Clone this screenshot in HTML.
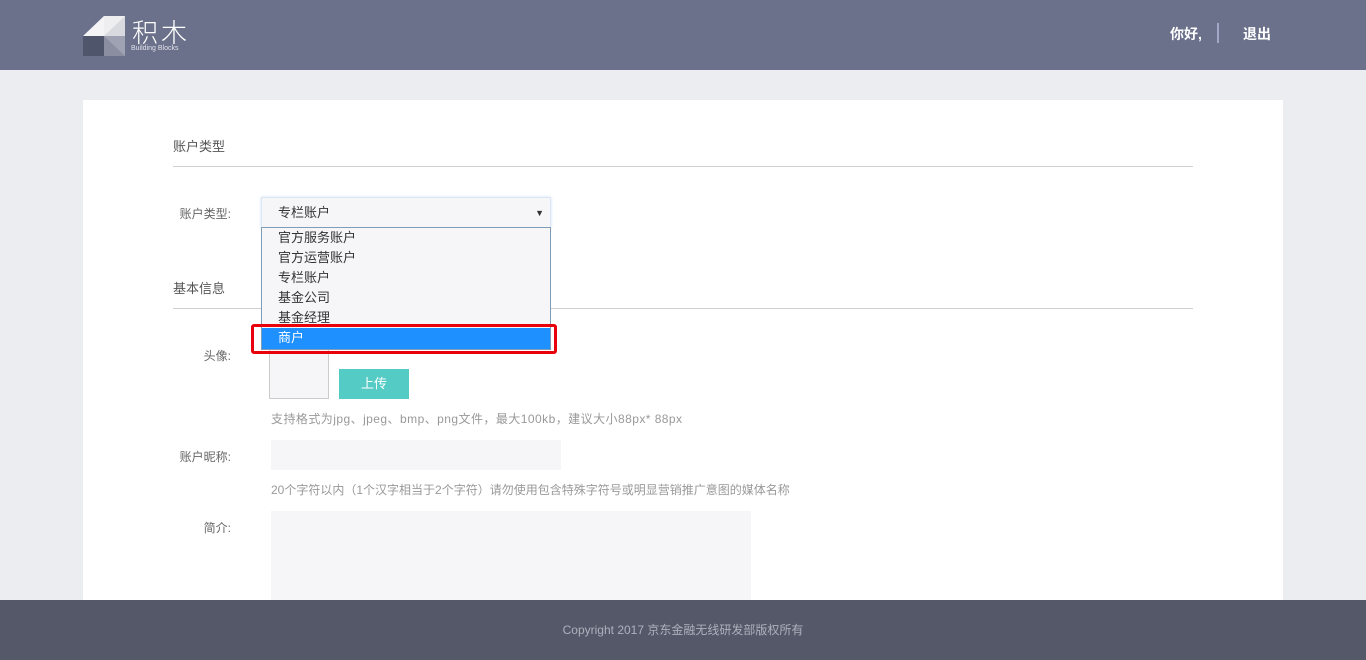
<!DOCTYPE html>
<html><head><meta charset="utf-8"><style>
*{margin:0;padding:0;box-sizing:border-box}
body{width:1366px;height:660px;overflow:hidden;background:#ecedf1;font-family:"Liberation Sans","Noto Sans CJK SC",sans-serif;font-size:13px;color:#555;position:relative}
.hd{position:absolute;left:0;top:0;width:1366px;height:70px;background:#6b718b}
.ab{position:absolute}
.card{position:absolute;left:83px;top:100px;width:1200px;height:520px;background:#fff}
.ft{position:absolute;left:0;top:600px;width:1366px;height:60px;background:#545868;color:#aeb1bd;font-size:12px;text-align:center;line-height:60px}
.line{position:absolute;height:1px;background:#d0d0d0}
.lbl{position:absolute;font-size:12px;color:#666;text-align:right;width:100px}
.tip{position:absolute;font-size:12px;color:#999}
.opt{height:20px;line-height:20px;padding-left:16px;font-size:13px;color:#333}
</style></head><body>
<div class="hd">
<svg class="ab" style="left:83px;top:16px" width="42" height="40" viewBox="0 0 42 40">
<polygon points="0,20 21,0 21,20" fill="#f4f4f6"/>
<polygon points="21,0 42,0 42,20 21,20" fill="#d9dae0"/>
<polygon points="21,0 42,0 21,20" fill="#eeeef1"/>
<polygon points="0,20 21,20 21,40 0,40" fill="#4f556b"/>
<polygon points="21,20 42,20 42,40 21,40" fill="#9ea2b2"/>
<polygon points="21,20 42,40 21,40" fill="#8a8ea0"/>
</svg>
<div class="ab" style="left:132px;top:13px;color:#fff;font-size:26px;font-weight:300;letter-spacing:3px">积木</div>
<div class="ab" style="left:131px;top:45px;color:#e0e2ea;font-size:7px">Building Blocks</div>
<div class="ab" style="left:1170px;top:24px;color:#fff;font-size:14px;font-weight:bold">你好,</div>
<div class="ab" style="left:1217px;top:23px;width:2px;height:20px;background:#a2a7c8"></div>
<div class="ab" style="left:1243px;top:24px;color:#fff;font-size:14px;font-weight:bold">退出</div>
</div>
<div class="card"></div>
<div class="ab" style="left:173px;top:136px;font-size:13px;color:#555">账户类型</div>
<div class="line" style="left:173px;top:166px;width:1020px"></div>
<div class="lbl" style="left:131px;top:205px">账户类型:</div>
<div class="ab" style="left:261px;top:197px;width:290px;height:31px;background:#f6f6f8;border:1px solid #dde6f3;box-shadow:0 0 3px #cfe0f5;line-height:30px;padding-left:16px;font-size:13px;color:#333">专栏账户<span style="position:absolute;right:6px;top:0;font-size:9px">▼</span></div>
<div class="ab" style="left:173px;top:278px;font-size:13px;color:#555">基本信息</div>
<div class="line" style="left:173px;top:308px;width:1020px"></div>
<div class="lbl" style="left:131px;top:347px">头像:</div>
<div class="ab" style="left:269px;top:338px;width:60px;height:61px;border:1px solid #ccc;background:#f6f6f8"></div>
<div class="ab" style="left:339px;top:369px;width:70px;height:30px;background:#55cbc5;color:#fff;text-align:center;line-height:30px;font-size:13px">上传</div>
<div class="tip" style="left:271px;top:410px;letter-spacing:0.45px">支持格式为jpg、jpeg、bmp、png文件，最大100kb，建议大小88px* 88px</div>
<div class="lbl" style="left:131px;top:448px">账户昵称:</div>
<div class="ab" style="left:271px;top:440px;width:290px;height:30px;background:#f6f6f8"></div>
<div class="tip" style="left:271px;top:481px">20个字符以内（1个汉字相当于2个字符）请勿使用包含特殊字符号或明显营销推广意图的媒体名称</div>
<div class="lbl" style="left:131px;top:519px">简介:</div>
<div class="ab" style="left:271px;top:511px;width:480px;height:100px;background:#f6f6f8"></div>
<div class="ab" style="left:261px;top:227px;width:290px;height:123px;background:#f6f6f8;border:1px solid #7f9db9;padding-top:0">
<div class="opt">官方服务账户</div><div class="opt">官方运营账户</div><div class="opt">专栏账户</div><div class="opt">基金公司</div><div class="opt">基金经理</div><div class="opt" style="background:#1e90ff;color:#fff;height:21px">商户</div>
</div>
<div class="ab" style="left:251px;top:324px;width:306px;height:30px;border:3px solid #e8000a;border-radius:3px"></div>
<div class="ft">Copyright 2017 京东金融无线研发部版权所有</div>
</body></html>
